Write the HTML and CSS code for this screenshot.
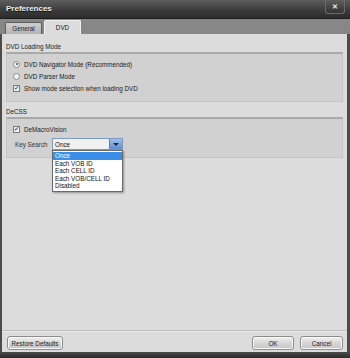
FILE: index.html
```html
<!DOCTYPE html>
<html lang="en">
<head>
    <meta charset="UTF-8">
    <title>Preferences</title>
    <link rel="stylesheet" href="styles.css">
</head>
<body>
    <div class="window">
        <div class="titlebar">
            <span class="title">Preferences</span>
            <span class="close-btn">&#x2715;</span>
        </div>

        <div class="tabstrip">
            <div class="tab">General</div>
            <div class="tab active">DVD</div>
        </div>

        <div class="content">
            <div class="group-label">DVD Loading Mode</div>
            <div class="group group-loading">
                <div class="option"><span class="radio checked"></span>DVD Navigator Mode (Recommended)</div>
                <div class="option"><span class="radio"></span>DVD Parser Mode</div>
                <div class="option"><span class="check">&#x2714;</span>Show mode selection when loading DVD</div>
            </div>

            <div class="group-label">DeCSS</div>
            <div class="group group-decss">
                <div class="option"><span class="check">&#x2714;</span>DeMacroVision</div>
                <div class="key-row">
                    <span class="key-label">Key Search</span>
                    <div class="combo">
                        <span class="combo-value">Once</span>
                        <span class="combo-arrow"></span>
                        <ul class="combo-list">
                            <li class="selected">Once</li>
                            <li>Each VOB ID</li>
                            <li>Each CELL ID</li>
                            <li>Each VOB/CELL ID</li>
                            <li>Disabled</li>
                        </ul>
                    </div>
                </div>
            </div>
        </div>

        <div class="footer">
            <button class="btn btn-restore">Restore Defaults</button>
            <div class="footer-right">
                <button class="btn btn-ok">OK</button>
                <button class="btn btn-cancel">Cancel</button>
            </div>
        </div>
        <div class="bottom-bar"></div>
    </div>
</body>
</html>
```

FILE: styles.css
```css
body {
    margin: 0;
    font-family: "Liberation Sans", Arial, sans-serif;
    font-size: 6.3px;
    color: #1a1a1a;
}

.window {
    width: 350px;
    height: 358px;
    display: flex;
    flex-direction: column;
    background: #dcdcdc;
    box-sizing: border-box;
    border-left: 2px solid #4c4c4c;
    border-right: 3px solid #4c4c4c;
}

/* Dark title bar */
.titlebar {
    flex-shrink: 0;
    height: 18px;
    margin: 0 -3px 0 -2px;
    padding: 0 5px 0 6px;
    display: flex;
    align-items: flex-start;
    justify-content: space-between;
    background: linear-gradient(#5e5e5e, #3a3a3a 60%, #2c2c2c);
    border-bottom: 1px solid #1c1c1c;
}

.title {
    margin-top: 4px;
    font-size: 8px;
    font-weight: bold;
    color: #f0f0f0;
    text-shadow: 0 1px 0 #111;
}

.close-btn {
    width: 20px;
    height: 14px;
    border: 1px solid #6a6a6a;
    border-top: none;
    border-radius: 0 0 3px 3px;
    box-sizing: border-box;
    text-align: center;
    line-height: 13px;
    font-size: 7px;
    font-weight: bold;
    color: #e8e8e8;
}

/* Tabs */
.tabstrip {
    flex-shrink: 0;
    height: 15px;
    margin: 0 -3px 0 -2px;
    padding-left: 5px;
    display: flex;
    align-items: flex-end;
    gap: 2px;
    background: #878787;
}

.tab {
    width: 37px;
    height: 12px;
    box-sizing: border-box;
    text-align: center;
    line-height: 11px;
    background: linear-gradient(#cfcfcf, #b3b3b3);
    border: 1px solid #5e5e5e;
    border-bottom: none;
    border-radius: 2px 2px 0 0;
    color: #222;
}

.tab.active {
    height: 14px;
    line-height: 14px;
    background: #dcdcdc;
    border-color: #f0f0f0;
}

/* Main area */
.content {
    flex: 1;
    padding: 8px 4px 0 4px;
}

.group-label {
    height: 10px;
    line-height: 10px;
}

.group {
    background: #d1d1d1;
    border: 1px solid #c4c4c4;
    border-top: 2px solid #a9a9a9;
    padding-left: 6px;
    box-sizing: border-box;
}

.group-loading {
    height: 50px;
    padding-top: 4px;
    margin-bottom: 5px;
}

.group-decss {
    height: 41px;
    padding-top: 4px;
}

.option {
    display: flex;
    align-items: center;
    height: 12px;
    gap: 4px;
}

.radio {
    width: 7px;
    height: 7px;
    border-radius: 50%;
    border: 1px solid #8a8a8a;
    background: #f4f4f4;
    box-sizing: border-box;
    position: relative;
}

.radio.checked::after {
    content: "";
    position: absolute;
    left: 1.5px;
    top: 1.5px;
    width: 2px;
    height: 2px;
    border-radius: 50%;
    background: #2a4f8a;
}

.check {
    width: 7px;
    height: 7px;
    border: 1px solid #7a7a7a;
    background: #f4f4f4;
    box-sizing: border-box;
    font-size: 6px;
    line-height: 5px;
    text-align: center;
    color: #2a5aa8;
}

.key-row {
    display: flex;
    align-items: center;
    margin-top: 3px;
    padding-left: 2px;
}

.key-label {
    width: 37px;
    color: #333;
}

/* Combo box with open list */
.combo {
    position: relative;
    width: 71px;
    height: 12px;
    box-sizing: border-box;
    border: 1px solid #7d9cc4;
    background: #f0f0f0;
    display: flex;
    align-items: center;
}

.combo-value {
    flex: 1;
    padding-left: 2px;
    color: #111;
}

.combo-arrow {
    width: 12px;
    height: 10px;
    background: linear-gradient(#9fc0ea, #5f8ed0);
    border-left: 1px solid #5d7fae;
    position: relative;
}

.combo-arrow::after {
    content: "";
    position: absolute;
    left: 3px;
    top: 4px;
    border-left: 3px solid transparent;
    border-right: 3px solid transparent;
    border-top: 3px solid #1a2a44;
}

.combo-list {
    position: absolute;
    left: -1px;
    top: 11px;
    width: 71px;
    margin: 0;
    padding: 1px 0;
    list-style: none;
    background: #ffffff;
    border: 1px solid #6a6a6a;
    box-sizing: border-box;
    box-shadow: 1px 1px 2px rgba(0, 0, 0, 0.35);
}

.combo-list li {
    height: 7.6px;
    line-height: 7.6px;
    padding-left: 2px;
    color: #111;
}

.combo-list li.selected {
    background: #3b8ee8;
    color: #fff;
}

/* Footer */
.footer {
    flex-shrink: 0;
    height: 22px;
    padding: 5px 4px 0 5px;
    border-top: 1px solid #bdbdbd;
    box-shadow: inset 0 1px 0 #ececec;
    display: flex;
    justify-content: space-between;
    align-items: flex-start;
    box-sizing: border-box;
}

.footer-right {
    display: flex;
    gap: 6px;
}

.btn {
    height: 14px;
    padding: 0;
    font-family: "Liberation Sans", Arial, sans-serif;
    font-size: 6.3px;
    color: #222;
    background: linear-gradient(#f2f2f2, #d6d6d6 50%, #c6c6c6);
    border: 1px solid #8c8c8c;
    border-radius: 3px;
    box-shadow: inset 0 0 0 1px #f8f8f8;
}

.btn-restore {
    width: 56px;
}

.btn-ok {
    width: 42px;
}

.btn-cancel {
    width: 43px;
}

.bottom-bar {
    flex-shrink: 0;
    height: 6px;
    margin: 0 -3px 0 -2px;
    background: linear-gradient(#4a4a4a, #2a2a2a);
}
```
